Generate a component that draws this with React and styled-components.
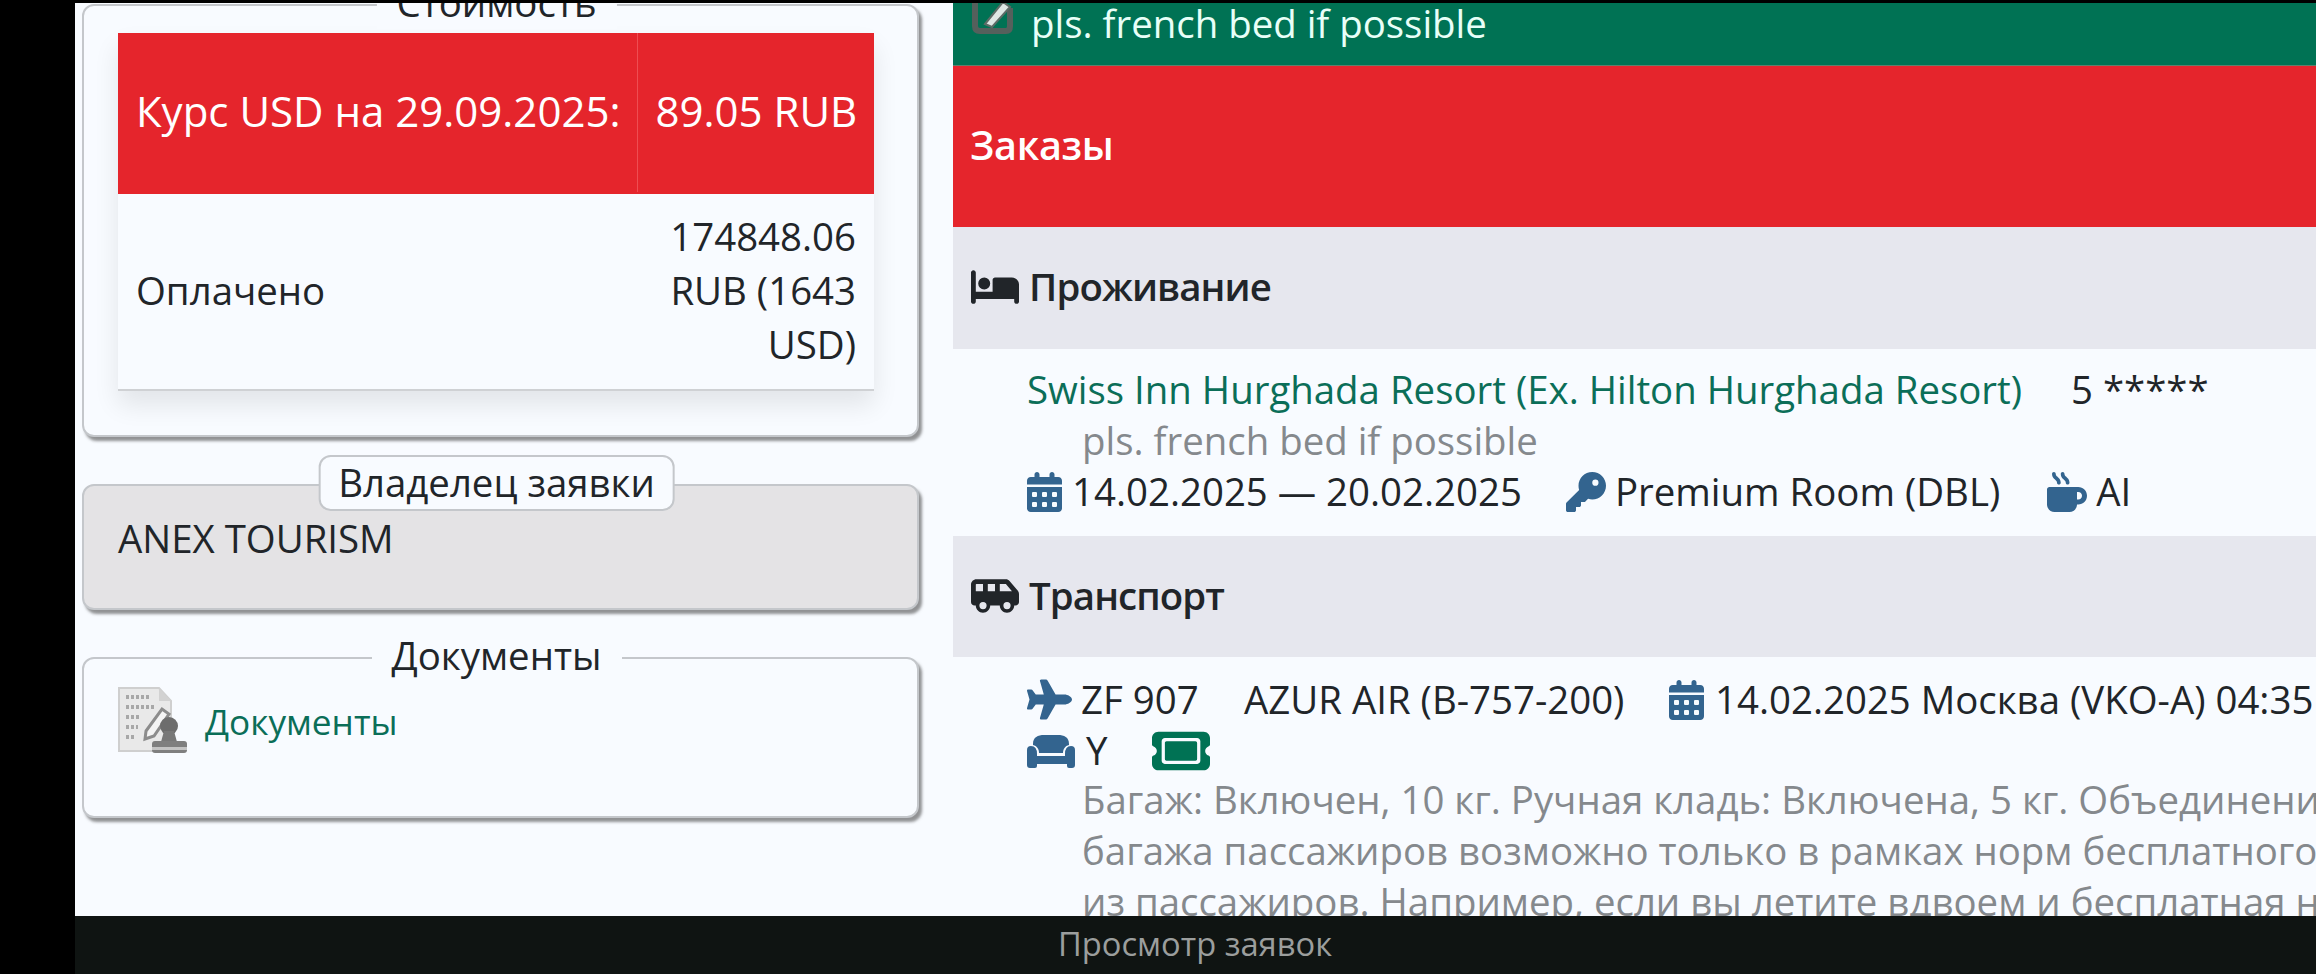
import styled, { createGlobalStyle } from "styled-components"
import { FaBed, FaVanShuttle, FaCalendarDays, FaKey, FaMugHot, FaPlane, FaTicket } from "react-icons/fa6"

const GlobalStyle = createGlobalStyle`
  html, body {
    margin: 0;
    padding: 0;
    background: #000;
    overflow: hidden;
  }
  body {
    font-family: "Open Sans", "Liberation Sans", sans-serif;
    font-size: 38.4px;
    line-height: 1.5;
    color: #212529;
  }
`

const Screen = styled.div`
  width: 2316px;
  height: 974px;
  padding-left: 75px;
  box-sizing: border-box;
  display: flex;
  flex-direction: column;
  overflow: hidden;
  background: #000;
`

const Body = styled.div`
  flex: 1;
  min-height: 0;
  margin-top: 3px;
  display: flex;
  overflow: hidden;
  background: #f8fbff;
`

const LeftColumn = styled.div`
  width: 878px;
  flex: none;
  box-sizing: border-box;
  padding: 1px 34px 0 7px;
  display: flex;
  flex-direction: column;
  gap: 47px;
`

const RightColumn = styled.div`
  flex: 1;
  min-width: 0;
  display: flex;
  flex-direction: column;
  overflow: hidden;
`

const Card = styled.section`
  position: relative;
  box-sizing: border-box;
  height: ${(p) => p.$height}px;
  padding: ${(p) => p.$top}px 34px 0;
  border: 2px solid #c4c7cb;
  border-radius: 12px;
  background: ${(p) => p.$bg || "#f8fbff"};
  box-shadow: 3px 4px 3px rgba(60, 60, 60, 0.55);
`

const Legend = styled.div`
  position: absolute;
  top: -31px;
  left: calc(50% - 4px);
  transform: translateX(-50%);
  padding: 0 20px;
  white-space: nowrap;
  background: #f8fbff;
  line-height: 54px;
`

const BadgeLegend = styled(Legend)`
  padding: 0 18px;
  height: 52px;
  line-height: 50px;
  border: 2px solid #c4c7cb;
  border-radius: 12px;
`

const PriceTable = styled.table`
  width: 756px;
  table-layout: fixed;
  border-collapse: collapse;
  box-shadow: 0 14px 24px rgba(0, 0, 0, 0.09);
  line-height: 54px;
`

const Row = styled.tr`
  background: ${(p) => (p.$head ? "#e5252c" : "#f8fbff")};
  color: ${(p) => (p.$head ? "#fff" : "#212529")};
  height: ${(p) => p.$height}px;
  border-bottom: 2px solid ${(p) => (p.$head ? "#e5252c" : "#cfd1d4")};
  font-size: ${(p) => (p.$head ? "42px" : "38.4px")};
  white-space: ${(p) => (p.$head ? "nowrap" : "normal")};
`

const Cell = styled.td`
  padding: 0 18px 4px 18px;
  text-align: ${(p) => (p.$right ? "right" : "left")};
  border-right: ${(p) => (p.$divider ? "1px solid #ee4d52" : "none")};
`

const DocRow = styled.div`
  display: flex;
  align-items: center;
  gap: 17px;
`

const DocLink = styled.a`
  color: #0b6e58;
  font-size: 35.2px;
  line-height: 51px;
  margin-bottom: 1px;
`

const GreenBand = styled.div`
  height: 63px;
  flex: none;
  box-sizing: border-box;
  padding-left: 18px;
  display: flex;
  align-items: flex-start;
  gap: 16px;
  background: #007254;
  border-bottom: 1px solid #5f7f6c;
  color: #e8fff8;
  line-height: 40px;
`

const EditIcon = styled.svg`
  width: 44px;
  height: 36px;
  margin-top: -3px;
  flex: none;
`

const RedBand = styled.div`
  height: 161px;
  flex: none;
  box-sizing: border-box;
  padding: 0 0 2px 17px;
  display: flex;
  align-items: center;
  background: #e5252c;
  color: #fff;
  font-size: 39.6px;
  font-weight: 600;
  letter-spacing: -0.3px;
`

const SectionBand = styled.div`
  height: ${(p) => p.$height}px;
  flex: none;
  box-sizing: border-box;
  padding: 0 0 2px 18px;
  display: flex;
  align-items: center;
  gap: 10px;
  background: #e6e7ee;
  font-weight: 600;
  letter-spacing: -0.9px;

  svg {
    width: 48px;
    height: 48px;
    color: #212529;
  }
`

const SectionBody = styled.div`
  flex: none;
  height: ${(p) => p.$height}px;
  padding: ${(p) => p.$top}px 0 0 74px;
  box-sizing: border-box;
  line-height: 51px;
  white-space: nowrap;
`

const Line = styled.div`
  display: flex;
  align-items: center;
  height: 51px;
  gap: ${(p) => p.$gap || 0}px;
`

const Item = styled.span`
  display: inline-flex;
  align-items: center;
  gap: ${(p) => p.$gap || 10}px;
  flex: none;
  width: ${(p) => (p.$width ? `${p.$width}px` : "auto")};
  margin-left: ${(p) => p.$shift || 0}px;

  svg {
    color: #33648f;
    flex: none;
  }
`

const CalendarIcon = styled(FaCalendarDays)`
  width: 35px;
  height: 40px;
`

const HotelLink = styled.a`
  color: #0b6e58;
  flex: none;
  width: 1044px;
`

const Note = styled.div`
  color: #85898d;
  padding-left: 55px;
  line-height: 51px;
  margin-top: ${(p) => p.$shift || 0}px;
`

const Ticket = styled(FaTicket)`
  width: 58px;
  height: 58px;
  color: #007254;
`

const Footer = styled.footer`
  height: 58px;
  flex: none;
  box-sizing: border-box;
  padding: 0 0 2px 983px;
  display: flex;
  align-items: center;
  background: #0f1412;
  color: #9b9e9d;
  font-size: 32.7px;
`

// кресло в таком виде нет в наборе иконок, рисуем сами
const SeatIcon = () => (
  <svg width="48" height="34" viewBox="0 0 48 34">
    <path d="M6 10C6 3 11 1 17 1h14c6 0 11 2 11 9v1c-4 1-6 4-6 8H12c0-4-2-7-6-8z" fill="currentColor" />
    <path d="M0 16q0-4 4-4 6 0 6 8v2h28v-2q0-8 6-8 4 0 4 4v15q0 3-3 3h-3q-2 0-2-2v-2H10v2q0 2-2 2H3q-3 0-3-3z" fill="currentColor" />
  </svg>
)

const DocStampIcon = () => (
  <svg width="70" height="70" viewBox="0 0 70 70">
    <defs>
      <filter id="soft">
        <feGaussianBlur stdDeviation="0.7" />
      </filter>
    </defs>
    <g filter="url(#soft)">
      <path d="M1 1h40l12 13v50H1z" fill="#e9e9e9" stroke="#cfcfcf" strokeWidth="2" />
      <path d="M41 1v13h12z" fill="#d2d2d2" />
      <path d="M8 10h24M8 20h30M8 30h14M8 40h12M8 50h10" stroke="#a8a8a8" strokeWidth="4" strokeDasharray="3 2" />
      <path d="M28 44 44 22l7 5-15 22-9 3z" fill="#f4f4f4" stroke="#8c8c8c" strokeWidth="3" />
      <circle cx="51" cy="39" r="9" fill="#6d6d6d" />
      <path d="M46 44h10l3 11H43z" fill="#787878" />
      <rect x="34" y="54" width="35" height="12" rx="3" fill="#7f7f7f" />
      <rect x="34" y="60" width="35" height="3" fill="#c4c4c4" />
    </g>
  </svg>
)

const App = () => (
  <>
    <GlobalStyle />
    <Screen>
      <Body>
        <LeftColumn>
          <Card $height={433} $top={27}>
            <Legend>Стоимость</Legend>
            <PriceTable>
              <colgroup>
                <col width="519" />
                <col width="237" />
              </colgroup>
              <tbody>
                <Row $head $height={160}>
                  <Cell $divider>Курс USD на 29.09.2025:</Cell>
                  <Cell $right>89.05 RUB</Cell>
                </Row>
                <Row $height={197}>
                  <Cell>Оплачено</Cell>
                  <Cell $right>174848.06 RUB (1643 USD)</Cell>
                </Row>
              </tbody>
            </PriceTable>
          </Card>

          <Card $height={126} $bg="#e4e3e5" $top={24}>
            <BadgeLegend>Владелец заявки</BadgeLegend>
            ANEX TOURISM
          </Card>

          <Card $height={161} $top={28}>
            <Legend>Документы</Legend>
            <DocRow>
              <DocStampIcon />
              <DocLink>Документы</DocLink>
            </DocRow>
          </Card>
        </LeftColumn>

        <RightColumn>
          <GreenBand>
            <EditIcon viewBox="0 0 44 36">
              <path d="M4 0v26q0 5 5 5h26q4 0 4-5V8" fill="none" stroke="#55605c" strokeWidth="6" />
              <path d="M14 24 32 2l7 5-18 20z" fill="#dfe7e4" stroke="#5d6b66" strokeWidth="2" />
            </EditIcon>
            pls. french bed if possible
          </GreenBand>
          <RedBand>Заказы</RedBand>
          <SectionBand $height={122}>
            <FaBed />
            Проживание
          </SectionBand>
          <SectionBody $height={187} $top={15}>
            <Line>
              <HotelLink>Swiss Inn Hurghada Resort (Ex. Hilton Hurghada Resort)</HotelLink>
              5 *****
            </Line>
            <Note>pls. french bed if possible</Note>
            <Line $gap={44}>
              <Item $gap={10}>
                <CalendarIcon />
                14.02.2025 — 20.02.2025
              </Item>
              <Item $gap={9}>
                <FaKey size={40} />
                Premium Room (DBL)
              </Item>
              <Item $gap={9} $shift={3}>
                <FaMugHot size={40} />
                AI
              </Item>
            </Line>
          </SectionBody>
          <SectionBand $height={121}>
            <FaVanShuttle />
            Транспорт
          </SectionBand>
          <SectionBody $height={260} $top={17}>
            <Line>
              <Item $gap={9} $width={217}>
                <FaPlane size={45} />
                ZF 907
              </Item>
              <Item $width={425}>AZUR AIR (B-757-200)</Item>
              <Item $gap={11}>
                <CalendarIcon />
                14.02.2025 Москва (VKO-A) 04:35 — 14.02.2025 Хургада (HRG) 09:10
              </Item>
            </Line>
            <Line>
              <Item $gap={11} $width={125}>
                <SeatIcon />
                Y
              </Item>
              <Ticket />
            </Line>
            <Note $shift={-2}>
              Багаж: Включен, 10 кг. Ручная кладь: Включена, 5 кг. Объединение
              <br />
              багажа пассажиров возможно только в рамках норм бесплатного провоза
              <br />
              из пассажиров. Например, если вы летите вдвоем и бесплатная норма
            </Note>
          </SectionBody>
        </RightColumn>
      </Body>
      <Footer>Просмотр заявок</Footer>
    </Screen>
  </>
)

export default App
